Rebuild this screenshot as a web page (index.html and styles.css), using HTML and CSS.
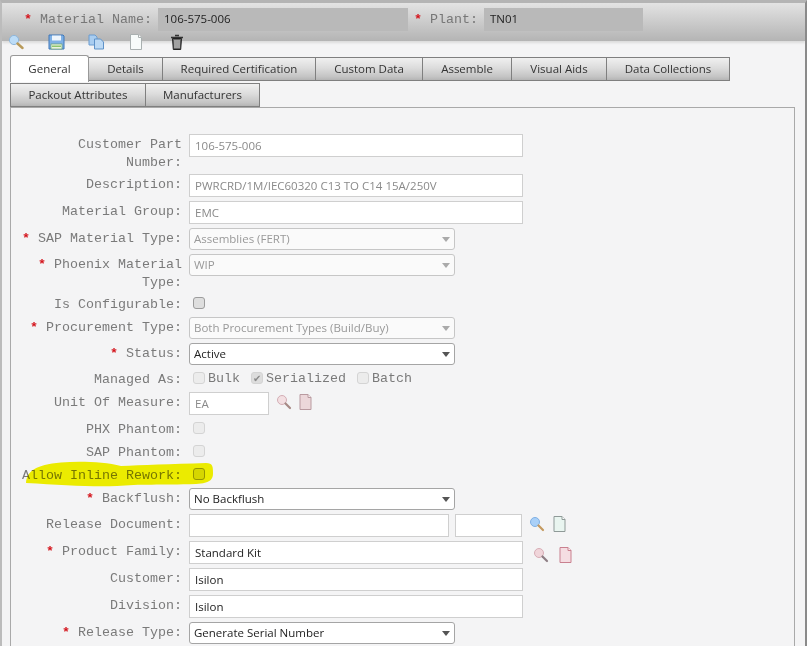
FILE: index.html
```html
<!DOCTYPE html>
<html lang="en">
<head>
<meta charset="utf-8">
<title>Material</title>
<link rel="stylesheet" href="styles.css">
</head>
<body>
<div class="window">
  <header class="head">
    <span class="head-label head-label-name"><i class="req">*</i> Material Name:</span>
    <div class="head-field head-field-name">106-575-006</div>
    <span class="head-label head-label-plant"><i class="req">*</i> Plant:</span>
    <div class="head-field head-field-plant">TN01</div>
  </header>
  <div class="toolbar">
    <svg class="tool tool-search" width="16" height="16" viewBox="0 0 16 16"><circle cx="6" cy="6" r="4.6" fill="#bcdcf7" stroke="#8fb7dc"/><path d="M9.500 9.500 14.500 14" stroke="#b89a5a" stroke-width="2.400" stroke-linecap="round"/></svg>
    <svg class="tool tool-save" width="17" height="16" viewBox="0 0 17 16"><path d="M1 1h14l1 1v13H1z" fill="#7fb1e6" stroke="#3f76b8"/><rect x="4" y="1.500" width="9" height="5" fill="#eef5fc"/><rect x="3" y="10" width="11" height="5" fill="#e9f2e0" stroke="#5e9a5e" stroke-width=".6"/><rect x="4" y="11.500" width="9" height="1.500" fill="#8cc56e"/></svg>
    <svg class="tool tool-copy" width="17" height="16" viewBox="0 0 17 16"><path d="M1 1h6l2 2v8H1z" fill="#a9cdf0" stroke="#6b9cd0"/><path d="M6.500 5h6l3 3v7h-9z" fill="#bcd9f4" stroke="#5f92c8"/></svg>
    <svg class="tool tool-doc" width="14" height="16" viewBox="0 0 14 16"><path d="M1.500.5h8l3 3v12h-11z" fill="#f7fbfa" stroke="#a9b0b0"/><path d="M9.500.5v3h3" fill="#fff" stroke="#a9b0b0"/></svg>
    <svg class="tool tool-trash" width="14" height="16" viewBox="0 0 14 16"><path d="M5 1.500h4M1 3.500h12" stroke="#333" stroke-width="1.600"/><path d="M2.500 4.500h9l-.8 11H3.300z" fill="#666" stroke="#222"/><path d="M5 6v8M7 6v8M9 6v8" stroke="#ddd"/></svg>
  </div>
  <nav class="tabs">
    <div class="tab tab-active tab-general">General</div>
    <div class="tab tab-details">Details</div>
    <div class="tab tab-cert">Required Certification</div>
    <div class="tab tab-custom">Custom Data</div>
    <div class="tab tab-assemble">Assemble</div>
    <div class="tab tab-visual">Visual Aids</div>
    <div class="tab tab-data">Data Collections</div>
  </nav>
  <nav class="tabs tabs-second">
    <div class="tab tab-packout">Packout Attributes</div>
    <div class="tab tab-manuf">Manufacturers</div>
  </nav>
  <main class="panel">
    <div class="row">
      <label class="lbl">Customer Part Number:</label>
      <div class="field field-wide dim">106-575-006</div>
    </div>
    <div class="row">
      <label class="lbl">Description:</label>
      <div class="field field-wide dim">PWRCRD/1M/IEC60320 C13 TO C14 15A/250V</div>
    </div>
    <div class="row">
      <label class="lbl">Material Group:</label>
      <div class="field field-wide dim">EMC</div>
    </div>
    <div class="row">
      <label class="lbl"><i class="req">*</i> SAP Material Type:</label>
      <div class="select select-off">Assemblies (FERT)</div>
    </div>
    <div class="row">
      <label class="lbl"><i class="req">*</i> Phoenix Material Type:</label>
      <div class="select select-off">WIP</div>
    </div>
    <div class="row row-check">
      <label class="lbl">Is Configurable:</label>
      <span class="check check-on"></span>
    </div>
    <div class="row">
      <label class="lbl"><i class="req">*</i> Procurement Type:</label>
      <div class="select select-off">Both Procurement Types (Build/Buy)</div>
    </div>
    <div class="row">
      <label class="lbl"><i class="req">*</i> Status:</label>
      <div class="select">Active</div>
    </div>
    <div class="row row-check">
      <label class="lbl">Managed As:</label>
      <div class="choices">
        <span class="check"></span><span class="choice">Bulk</span>
        <span class="check check-ticked">✔</span><span class="choice">Serialized</span>
        <span class="check"></span><span class="choice">Batch</span>
      </div>
    </div>
    <div class="row">
      <label class="lbl">Unit Of Measure:</label>
      <div class="field field-uom dim">EA</div>
      <div class="icons icons-uom">
        <svg width="16" height="16" viewBox="0 0 16 16"><circle cx="6" cy="6" r="4.500" fill="#f3dfe2" stroke="#d3aeb5"/><path d="M9.500 9.500 14 14" stroke="#a78a86" stroke-width="2.200" stroke-linecap="round"/></svg>
        <svg width="13" height="16" viewBox="0 0 13 16"><path d="M1 .5h8l3 3v12H1z" fill="#ecd7da" stroke="#b99aa0"/><path d="M9 .5v3h3" fill="#f8eeee" stroke="#b99aa0"/></svg>
      </div>
    </div>
    <div class="row row-check">
      <label class="lbl">PHX Phantom:</label>
      <span class="check"></span>
    </div>
    <div class="row row-check">
      <label class="lbl">SAP Phantom:</label>
      <span class="check"></span>
    </div>
    <div class="row row-check">
      <label class="lbl">Allow Inline Rework:</label>
      <span class="check check-on"></span>
    </div>
    <div class="row">
      <label class="lbl"><i class="req">*</i> Backflush:</label>
      <div class="select">No Backflush</div>
    </div>
    <div class="row">
      <label class="lbl">Release Document:</label>
      <div class="field field-doc"></div>
      <div class="field field-rev"></div>
      <div class="icons icons-doc">
        <svg width="16" height="16" viewBox="0 0 16 16"><circle cx="6" cy="6" r="4.500" fill="#a9d0f8" stroke="#7fb0e4"/><path d="M9.500 9.500 14 14" stroke="#c49a60" stroke-width="2.200" stroke-linecap="round"/></svg>
        <svg width="13" height="16" viewBox="0 0 13 16"><path d="M1 .5h8l3 3v12H1z" fill="#e9f5f0" stroke="#8f9a98"/><path d="M9 .5v3h3" fill="#fff" stroke="#8f9a98"/></svg>
      </div>
    </div>
    <div class="row">
      <label class="lbl"><i class="req">*</i> Product Family:</label>
      <div class="field field-wide">Standard Kit</div>
      <div class="icons icons-family">
        <svg width="16" height="16" viewBox="0 0 16 16"><circle cx="6" cy="6" r="4.500" fill="#f0d5da" stroke="#d8adb6"/><path d="M9.500 9.500 14 14" stroke="#8e7e84" stroke-width="2.200" stroke-linecap="round"/></svg>
        <svg width="13" height="16" viewBox="0 0 13 16"><path d="M1 .5h8l3 3v12H1z" fill="#f5dde2" stroke="#c9808f"/><path d="M9 .5v3h3" fill="#fbeef0" stroke="#c9808f"/></svg>
      </div>
    </div>
    <div class="row">
      <label class="lbl">Customer:</label>
      <div class="field field-wide">Isilon</div>
    </div>
    <div class="row">
      <label class="lbl">Division:</label>
      <div class="field field-wide">Isilon</div>
    </div>
    <div class="row">
      <label class="lbl"><i class="req">*</i> Release Type:</label>
      <div class="select">Generate Serial Number</div>
    </div>
  </main>
  <svg class="marker" width="200" height="30" viewBox="0 0 200 30"><path d="M5 24C6 12 14 6 40 3.500C60 2 84 3 100 7C120 6 150 5 185 4C192 4 192 8 192 14C192 20 190 24 175 25C140 26 118 25 96 27C70 28 40 26 5 24Z" fill="#f6f600"/></svg>
</div>
</body>
</html>
```

FILE: styles.css
```css
* { box-sizing: border-box; }
html, body { margin: 0; height: 100%; overflow: hidden; background: #f4f4f5; }
.window {
  position: relative;
  height: 646px;
  overflow: hidden;
  border-top: 3px solid #b4b4b4;
  border-left: 2px solid #bcbcbc;
  border-right: 2px solid #8a8a8a;
  background: #f4f4f5;
  font-family: "Open Sans", sans-serif;
  font-size: 11.5px;
}
.req { color: #d4141c; font-style: normal; font-weight: 700; }

.head {
  height: 38px;
  padding: 5px 0 0 22px;
  display: flex;
  align-items: flex-start;
  background: linear-gradient(#e3e3e3, #d0d0d0 40%, #b4b4b4);
  box-shadow: 0 2px 2px #dcdcdc;
}
.head-label {
  font-family: "Liberation Mono", monospace;
  font-size: 13.33px;
  line-height: 23px;
  color: #777;
  white-space: nowrap;
}
.head-label-name { width: 134px; }
.head-label-plant { width: 70px; margin-left: 6px; }
.head-field {
  height: 23px;
  line-height: 22px;
  padding-left: 6px;
  background: #b9b9b9;
  color: #222;
  font-size: 11.5px;
}
.head-field-name { width: 250px; }
.head-field-plant { width: 159px; }

.toolbar {
  position: relative;
  display: flex;
  height: 16px;
  margin-top: -7px;
  padding-left: 6px;
}
.tool { flex: none; }
.tool-save { margin-left: 24px; }
.tool-copy { margin-left: 23px; }
.tool-doc { margin-left: 24px; }
.tool-trash { margin-left: 27px; }

.tabs {
  display: flex;
  align-items: flex-end;
  height: 31px;
  padding: 4px 0 0 8px;
}
.tabs-second { height: 26px; padding-top: 2px; }
.tab {
  height: 24px;
  padding-bottom: 2px;
  border: 1px solid #7f7f7f;
  margin-right: -1px;
  display: flex;
  align-items: center;
  justify-content: center;
  color: #333;
  font-size: 11.5px;
  background: linear-gradient(#f0f0f0, #dcdcdc 45%, #c4c4c4 85%, #b4b4b4);
}
.tab-active {
  height: 27px;
  background: #fff;
  border-color: #999;
  border-bottom: 0;
  border-radius: 3px 3px 0 0;
  position: relative;
  margin-bottom: -1px;
}
.tab-general { width: 79px; }
.tab-details { width: 75px; }
.tab-cert { width: 154px; }
.tab-custom { width: 108px; }
.tab-assemble { width: 90px; }
.tab-visual { width: 96px; }
.tab-data { width: 124px; }
.tab-packout { width: 136px; }
.tab-manuf { width: 115px; }

.panel {
  margin-left: 8px;
  width: 785px;
  height: 560px;
  border: 1px solid #a9a9a9;
  border-bottom: 0;
  padding: 26px 0 0 6px;
  display: flex;
  flex-direction: column;
  gap: 4px;
}
.row { display: flex; align-items: flex-start; }
.row-check { height: 19px; }
.lbl {
  flex: none;
  width: 165px;
  margin-right: 7px;
  margin-bottom: -2px;
  padding-top: 2px;
  text-align: right;
  font-family: "Liberation Mono", monospace;
  font-size: 13.33px;
  line-height: 18px;
  color: #7a7a7a;
}
.field {
  height: 23px;
  line-height: 21px;
  padding-left: 5px;
  background: #fff;
  border: 1px solid #cfcfcf;
  color: #222;
  white-space: nowrap;
}
.dim { color: #8a8a8a; }
.field-wide { width: 334px; }
.field-uom { width: 80px; }
.field-doc { width: 260px; }
.field-rev { width: 67px; margin-left: 6px; }

.select {
  position: relative;
  width: 266px;
  height: 22px;
  line-height: 20px;
  padding-left: 4px;
  background: #fff;
  border: 1px solid #a5a5a5;
  border-radius: 3px;
  color: #222;
}
.select::after {
  content: "";
  position: absolute;
  right: 4px;
  top: 8px;
  border: 4px solid transparent;
  border-top: 5px solid #555;
  border-bottom: 0;
}
.select-off { border-color: #c6c6c6; color: #999; background: #fafafa; }
.select-off::after { border-top-color: #aaa; }

.check {
  flex: none;
  width: 12px;
  height: 12px;
  margin: 3px 0 0 4px;
  border: 1px solid #d4d4d4;
  border-radius: 3px;
  background: #ececec;
}
.check-on { border-color: #9c9c9c; background: #dedede; }
.check-ticked {
  display: flex;
  align-items: center;
  justify-content: center;
  font-size: 10px;
  line-height: 1;
  color: #8a8a8a;
  background: #ddd;
}
.choices { display: flex; align-items: flex-start; height: 19px; }
.choice {
  font-family: "Liberation Mono", monospace;
  font-size: 13.33px;
  line-height: 18px;
  color: #7a7a7a;
  margin: 1px 7px 0 3px;
}

.icons { display: flex; align-items: flex-start; padding-top: 2px; }
.icons-uom { margin-left: 7px; gap: 7px; }
.icons-doc { margin-left: 7px; gap: 8px; }
.icons-family { margin-left: 10px; gap: 10px; padding-top: 6px; }

.marker {
  position: absolute;
  left: 19px;
  top: 456px;
  mix-blend-mode: multiply;
  pointer-events: none;
}
```
